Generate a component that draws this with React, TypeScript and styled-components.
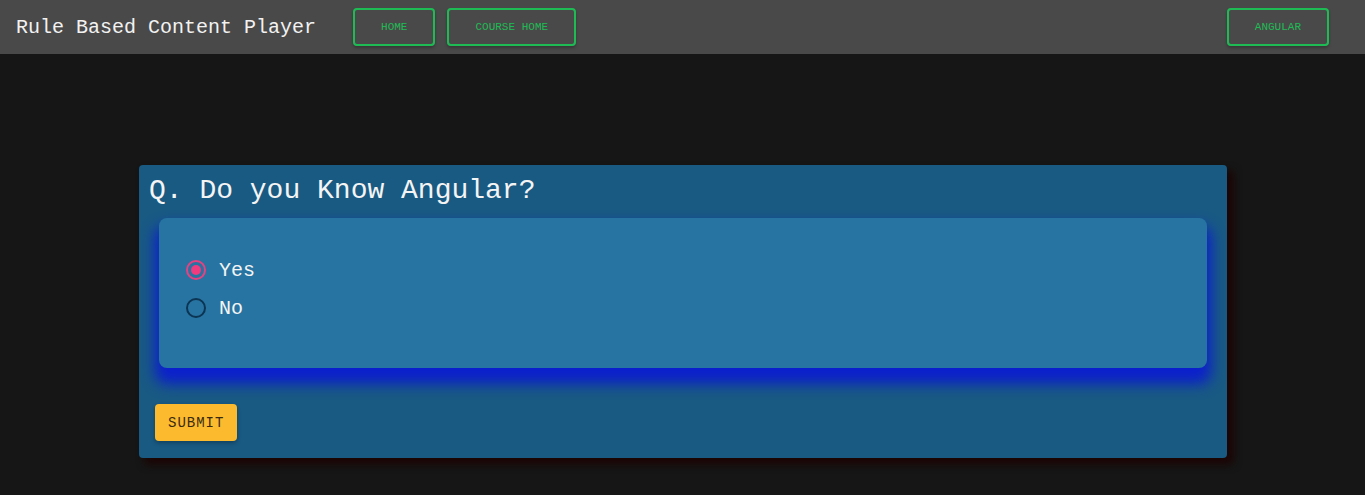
import React, { useState } from "react";
import styled, { createGlobalStyle } from "styled-components";

const Global = createGlobalStyle`
  html, body { margin: 0; padding: 0; background: #161616; }
  body { font-family: "Liberation Mono", "Courier New", monospace; }
  * { box-sizing: border-box; }
`;

const Page = styled.div`
  min-height: 495px;
  background: #161616;
`;

const Toolbar = styled.header`
  height: 54px;
  background: #4a4949;
  display: flex;
  align-items: center;
  gap: 12px;
  padding: 0 36px 0 16px;
`;

const Brand = styled.div`
  font-size: 20px;
  color: #f2f2f2;
  margin-right: 25px;
  white-space: nowrap;
`;

const NavButton = styled.button`
  height: 38px;
  padding: 0 26px;
  background: transparent;
  border: 2px solid #1ebb55;
  border-radius: 4px;
  color: #1ebb55;
  font-family: "Liberation Mono", "Courier New", monospace;
  font-size: 11px;
  text-transform: uppercase;
  cursor: pointer;
  box-shadow: 0 2px 3px rgba(0, 0, 0, 0.25);
`;

const Spacer = styled.div`
  flex: 1;
`;

const Main = styled.main`
  padding: 111px 138px 0 139px;
`;

const Card = styled.section`
  background: #195a83;
  border-radius: 4px;
  box-shadow: 6px 6px 8px #1c0303;
  padding: 10px 20px 17px 16px;
`;

const Question = styled.h2`
  margin: 0 0 11px -6px;
  font-weight: normal;
  font-size: 28px;
  line-height: 32px;
  color: #f4f4f4;
`;

const Panel = styled.div`
  margin-left: 4px;
  background: #2774a2;
  border-radius: 8px;
  padding: 42px 27px 50px;
  box-shadow: 0 12px 14px 4px #0c20cc;
  display: flex;
  flex-direction: column;
  gap: 18px;
`;

const Option = styled.label`
  display: flex;
  align-items: center;
  gap: 13px;
  font-size: 20px;
  color: #f4f4f4;
  height: 20px;
  cursor: pointer;
`;

const Ring = styled.span<{ $on: boolean }>`
  width: 20px;
  height: 20px;
  border-radius: 50%;
  border: 2px solid ${(p) => (p.$on ? "#e8417f" : "#0c3453")};
  display: flex;
  align-items: center;
  justify-content: center;
  &::after {
    content: "";
    width: 10px;
    height: 10px;
    border-radius: 50%;
    background: ${(p) => (p.$on ? "#f03c7e" : "transparent")};
  }
`;

const Submit = styled.button`
  margin-top: 36px;
  height: 37px;
  padding: 0 13px;
  background: #fcbb2e;
  border: none;
  border-radius: 4px;
  font-family: "Liberation Mono", "Courier New", monospace;
  font-size: 14px;
  letter-spacing: 1px;
  color: #3a2a10;
  box-shadow: 0 2px 4px rgba(0, 0, 0, 0.3);
  cursor: pointer;
`;

export default function App() {
  const [value, setValue] = useState("yes");
  return (
    <Page>
      <Global />
      <Toolbar>
        <Brand>Rule Based Content Player</Brand>
        <NavButton>Home</NavButton>
        <NavButton>Course Home</NavButton>
        <Spacer />
        <NavButton>Angular</NavButton>
      </Toolbar>
      <Main>
        <Card>
          <Question>Q. Do you Know Angular?</Question>
          <Panel>
            {[
              ["yes", "Yes"],
              ["no", "No"],
            ].map(([k, t]) => (
              <Option key={k} onClick={() => setValue(k)}>
                <Ring $on={value === k} />
                {t}
              </Option>
            ))}
          </Panel>
          <Submit>SUBMIT</Submit>
        </Card>
      </Main>
    </Page>
  );
}
